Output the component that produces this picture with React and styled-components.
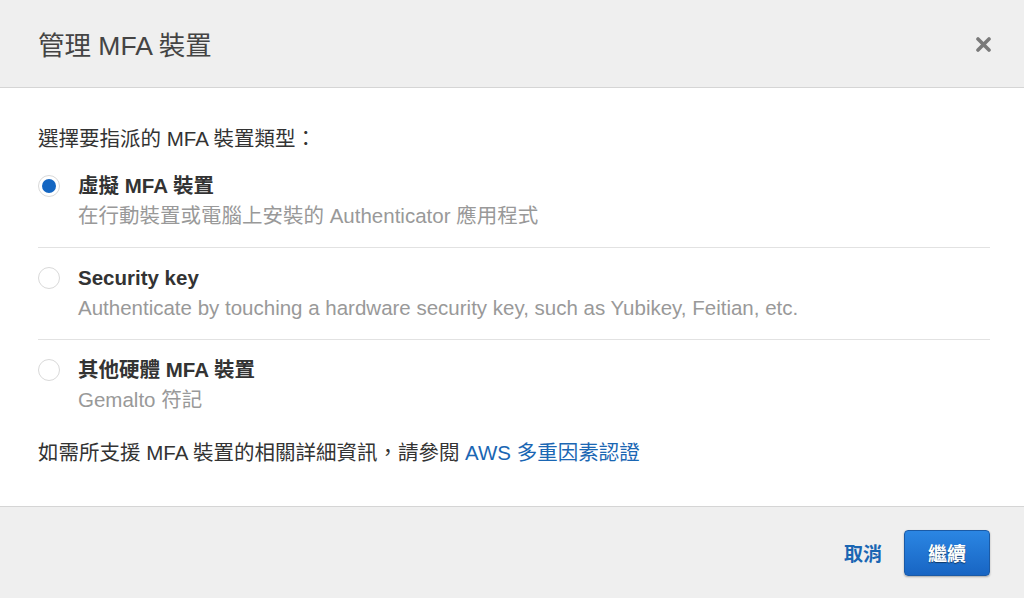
import React, { useState } from "react";
import styled, { createGlobalStyle } from "styled-components";

const GlobalStyle = createGlobalStyle`
  html, body {
    margin: 0;
    padding: 0;
    background: #ffffff;
  }
  body {
    font-family: "Liberation Sans", "Noto Sans CJK TC", sans-serif;
  }
`;

const options = [
  {
    id: "virtual",
    title: "虛擬 MFA 裝置",
    desc: "在行動裝置或電腦上安裝的 Authenticator 應用程式",
  },
  {
    id: "key",
    title: "Security key",
    desc: "Authenticate by touching a hardware security key, such as Yubikey, Feitian, etc.",
  },
  {
    id: "hardware",
    title: "其他硬體 MFA 裝置",
    desc: "Gemalto 符記",
  },
];

const App = () => {
  const [selected, setSelected] = useState("virtual");

  return (
    <>
      <GlobalStyle />
      <Dialog>
        <Header>
          <Title>管理 MFA 裝置</Title>
          <CloseBtn aria-label="close">
            <svg width="15" height="15" viewBox="0 0 15 15">
              <path
                d="M2 2 L13 13 M13 2 L2 13"
                stroke="#7a7a7a"
                strokeWidth="3.6"
                strokeLinecap="round"
              />
            </svg>
          </CloseBtn>
        </Header>
        <Body>
          <Prompt>選擇要指派的 MFA 裝置類型：</Prompt>
          <OptionList>
            {options.map((o) => (
              <Option key={o.id} onClick={() => setSelected(o.id)}>
                <Radio checked={selected === o.id} />
                <OptionText>
                  <OptionTitle>{o.title}</OptionTitle>
                  <OptionDesc>{o.desc}</OptionDesc>
                </OptionText>
              </Option>
            ))}
          </OptionList>
          <Info>
            如需所支援 MFA 裝置的相關詳細資訊，請參閱 <Link>AWS 多重因素認證</Link>
          </Info>
        </Body>
        <Footer>
          <CancelBtn>取消</CancelBtn>
          <PrimaryBtn>繼續</PrimaryBtn>
        </Footer>
      </Dialog>
    </>
  );
};

export default App;

const Dialog = styled.div`
  width: 1024px;
  height: 598px;
  display: flex;
  flex-direction: column;
  background: #fff;
  color: #333;
`;

const Header = styled.div`
  height: 88px;
  box-sizing: border-box;
  padding: 0 33px 0 38px;
  display: flex;
  align-items: center;
  justify-content: space-between;
  background: #efefef;
  border-bottom: 1px solid #d5d5d5;
`;

const Title = styled.h1`
  margin: 0;
  font-size: 26.5px;
  font-weight: 400;
  color: #444;
`;

const CloseBtn = styled.button`
  border: none;
  background: none;
  padding: 0;
  display: flex;
  cursor: pointer;
  margin-top: 2px;
`;

const Body = styled.div`
  flex: 1;
  padding: 38px 34px 0 38px;
`;

const Prompt = styled.div`
  font-size: 20.5px;
  line-height: 26px;
  color: #333;
`;

const OptionList = styled.div`
  margin-top: 21px;
`;

const Option = styled.div`
  display: flex;
  align-items: flex-start;
  gap: 18px;
  padding: 0 0 18px;
  margin-bottom: 17px;
  border-bottom: 1px solid #e2e2e2;
  cursor: pointer;

  &:last-child {
    border-bottom: none;
    margin-bottom: 0;
  }
`;

const Radio = styled.span`
  flex: none;
  width: 20px;
  height: 20px;
  margin-top: 2px;
  border-radius: 50%;
  border: 1px solid #d9d9d9;
  background: #fff;
  position: relative;

  &::after {
    content: "";
    position: absolute;
    left: 3px;
    top: 3px;
    width: 14px;
    height: 14px;
    border-radius: 50%;
    background: #1466c2;
    display: ${(p) => (p.checked ? "block" : "none")};
  }
`;

const OptionText = styled.div`
  display: flex;
  flex-direction: column;
`;

const OptionTitle = styled.div`
  font-size: 20.5px;
  line-height: 26px;
  font-weight: 700;
  color: #333;
`;

const OptionDesc = styled.div`
  margin-top: 4px;
  font-size: 20.5px;
  line-height: 26px;
  color: #999;
`;

const Info = styled.div`
  margin-top: 9px;
  font-size: 20.5px;
  line-height: 26px;
  color: #333;
`;

const Link = styled.a`
  color: #1a66b3;
  text-decoration: none;
  cursor: pointer;
`;

const Footer = styled.div`
  height: 92px;
  box-sizing: border-box;
  display: flex;
  align-items: center;
  justify-content: flex-end;
  gap: 22px;
  padding: 0 34px 0 0;
  background: #efefef;
  border-top: 1px solid #d5d5d5;
`;

const CancelBtn = styled.button`
  border: none;
  background: none;
  padding: 0;
  font-family: inherit;
  font-size: 19px;
  font-weight: 700;
  color: #1a66b3;
  cursor: pointer;
`;

const PrimaryBtn = styled.button`
  width: 86px;
  height: 46px;
  border: 1px solid #1a5aa6;
  border-radius: 4px;
  background: linear-gradient(#2b86e3, #1865c3);
  box-shadow: 0 1px 2px rgba(0, 0, 0, 0.3);
  color: #fff;
  font-family: inherit;
  font-size: 19px;
  font-weight: 700;
  text-shadow: 0 1px 1px rgba(0, 0, 0, 0.5);
  cursor: pointer;
`;
